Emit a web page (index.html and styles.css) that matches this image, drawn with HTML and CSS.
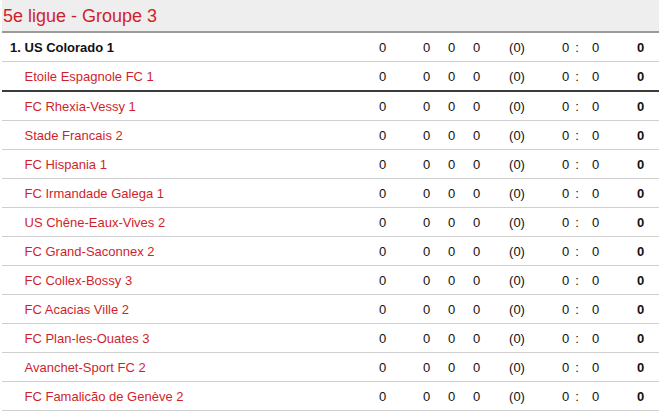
FILE: index.html
```html
<!DOCTYPE html>
<html>
<head>
<meta charset="utf-8">
<link rel="stylesheet" href="styles.css">
</head>
<body>
<div class="standings">
  <div class="title">5e ligue - Groupe 3</div>
  <div class="row first"><span class="rank">1.</span><span class="team">US Colorado 1</span><span class="n c1">0</span><span class="n c2">0</span><span class="n c3">0</span><span class="n c4">0</span><span class="n pen">(0)</span><span class="n gf">0</span><span class="n colon">:</span><span class="n ga">0</span><span class="n pts">0</span></div>
  <div class="row promo"><span class="rank"></span><span class="team">Etoile Espagnole FC 1</span><span class="n c1">0</span><span class="n c2">0</span><span class="n c3">0</span><span class="n c4">0</span><span class="n pen">(0)</span><span class="n gf">0</span><span class="n colon">:</span><span class="n ga">0</span><span class="n pts">0</span></div>
  <div class="row"><span class="rank"></span><span class="team">FC Rhexia-Vessy 1</span><span class="n c1">0</span><span class="n c2">0</span><span class="n c3">0</span><span class="n c4">0</span><span class="n pen">(0)</span><span class="n gf">0</span><span class="n colon">:</span><span class="n ga">0</span><span class="n pts">0</span></div>
  <div class="row"><span class="rank"></span><span class="team">Stade Francais 2</span><span class="n c1">0</span><span class="n c2">0</span><span class="n c3">0</span><span class="n c4">0</span><span class="n pen">(0)</span><span class="n gf">0</span><span class="n colon">:</span><span class="n ga">0</span><span class="n pts">0</span></div>
  <div class="row"><span class="rank"></span><span class="team">FC Hispania 1</span><span class="n c1">0</span><span class="n c2">0</span><span class="n c3">0</span><span class="n c4">0</span><span class="n pen">(0)</span><span class="n gf">0</span><span class="n colon">:</span><span class="n ga">0</span><span class="n pts">0</span></div>
  <div class="row"><span class="rank"></span><span class="team">FC Irmandade Galega 1</span><span class="n c1">0</span><span class="n c2">0</span><span class="n c3">0</span><span class="n c4">0</span><span class="n pen">(0)</span><span class="n gf">0</span><span class="n colon">:</span><span class="n ga">0</span><span class="n pts">0</span></div>
  <div class="row"><span class="rank"></span><span class="team">US Chêne-Eaux-Vives 2</span><span class="n c1">0</span><span class="n c2">0</span><span class="n c3">0</span><span class="n c4">0</span><span class="n pen">(0)</span><span class="n gf">0</span><span class="n colon">:</span><span class="n ga">0</span><span class="n pts">0</span></div>
  <div class="row"><span class="rank"></span><span class="team">FC Grand-Saconnex 2</span><span class="n c1">0</span><span class="n c2">0</span><span class="n c3">0</span><span class="n c4">0</span><span class="n pen">(0)</span><span class="n gf">0</span><span class="n colon">:</span><span class="n ga">0</span><span class="n pts">0</span></div>
  <div class="row"><span class="rank"></span><span class="team">FC Collex-Bossy 3</span><span class="n c1">0</span><span class="n c2">0</span><span class="n c3">0</span><span class="n c4">0</span><span class="n pen">(0)</span><span class="n gf">0</span><span class="n colon">:</span><span class="n ga">0</span><span class="n pts">0</span></div>
  <div class="row"><span class="rank"></span><span class="team">FC Acacias Ville 2</span><span class="n c1">0</span><span class="n c2">0</span><span class="n c3">0</span><span class="n c4">0</span><span class="n pen">(0)</span><span class="n gf">0</span><span class="n colon">:</span><span class="n ga">0</span><span class="n pts">0</span></div>
  <div class="row"><span class="rank"></span><span class="team">FC Plan-les-Ouates 3</span><span class="n c1">0</span><span class="n c2">0</span><span class="n c3">0</span><span class="n c4">0</span><span class="n pen">(0)</span><span class="n gf">0</span><span class="n colon">:</span><span class="n ga">0</span><span class="n pts">0</span></div>
  <div class="row"><span class="rank"></span><span class="team">Avanchet-Sport FC 2</span><span class="n c1">0</span><span class="n c2">0</span><span class="n c3">0</span><span class="n c4">0</span><span class="n pen">(0)</span><span class="n gf">0</span><span class="n colon">:</span><span class="n ga">0</span><span class="n pts">0</span></div>
  <div class="row"><span class="rank"></span><span class="team">FC Famalicão de Genève 2</span><span class="n c1">0</span><span class="n c2">0</span><span class="n c3">0</span><span class="n c4">0</span><span class="n pen">(0)</span><span class="n gf">0</span><span class="n colon">:</span><span class="n ga">0</span><span class="n pts">0</span></div>
</div>
</body>
</html>
```

FILE: styles.css
```css
html, body {
  margin: 0;
  padding: 0;
  background: #ffffff;
}

body {
  font-family: "Liberation Sans", Arial, sans-serif;
  font-size: 13px;
  color: #111111;
}

.standings {
  margin-left: 2px;
  width: 657px;
}

.title {
  height: 29px;
  padding: 2px 0 0 1px;
  line-height: 29px;
  font-size: 18px;
  color: #d01f2c;
  background: #eeeeee;
  border-bottom: 2px solid #9a9a9a;
}

.row {
  display: flex;
  align-items: center;
  height: 28px;
  border-bottom: 1px solid #cfcfcf;
  padding-left: 8px;
}

.row.promo {
  border-bottom: 2px solid #3c3c3c;
}

.rank {
  width: 14.5px;
  flex: none;
}

.team {
  width: 348px;
  flex: none;
  color: #d01f2c;
  white-space: nowrap;
}

.first .rank,
.first .team {
  font-weight: bold;
  color: #111111;
}

.n {
  flex: none;
  width: 20px;
  text-align: center;
}

.c1 { margin-left: 0; }
.c2 { margin-left: 24px; }
.c3 { margin-left: 5px; }
.c4 { margin-left: 5px; }
.pen { width: 30px; margin-left: 15.5px; }
.gf { width: 14px; margin-left: 26.5px; }
.colon { width: 9px; margin-left: 0; }
.ga { margin-left: 4px; }
.pts { margin-left: 25px; font-weight: bold; }
```
